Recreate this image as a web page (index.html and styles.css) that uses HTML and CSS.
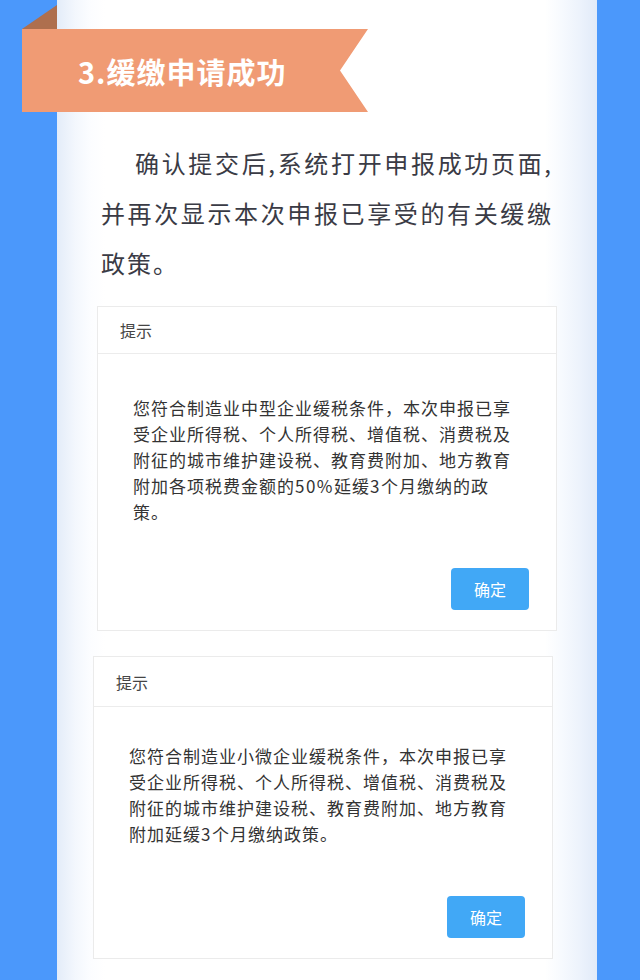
FILE: index.html
```html
<!DOCTYPE html>
<html lang="zh-CN">
<head>
<meta charset="utf-8">
<title>缓缴申请成功</title>
<link rel="stylesheet" href="styles.css">
</head>
<body>
<div class="panel">
  <div class="banner-wrap">
    <div class="banner"><span class="banner-text">3.缓缴申请成功</span></div>
  </div>
  <p class="intro">确认提交后,系统打开申报成功页面,并再次显示本次申报已享受的有关缓缴政策。</p>

  <div class="dlg dlg-one">
    <div class="dlg-head">提示</div>
    <div class="dlg-body">
      <p class="dlg-text">您符合制造业中型企业缓税条件，本次申报已享<br>受企业所得税、个人所得税、增值税、消费税及<br>附征的城市维护建设税、教育费附加、地方教育<br>附加各项税费金额的<span class="num">50%</span>延缓<span class="num">3</span>个月缴纳的政<br>策。</p>
      <div class="dlg-foot"><span class="btn">确定</span></div>
    </div>
  </div>

  <div class="dlg dlg-two">
    <div class="dlg-head">提示</div>
    <div class="dlg-body">
      <p class="dlg-text">您符合制造业小微企业缓税条件，本次申报已享<br>受企业所得税、个人所得税、增值税、消费税及<br>附征的城市维护建设税、教育费附加、地方教育<br>附加延缓<span class="num">3</span>个月缴纳政策。</p>
      <div class="dlg-foot"><span class="btn">确定</span></div>
    </div>
  </div>
</div>
</body>
</html>
```
FILE: styles.css
```css
html, body {
  margin: 0;
  padding: 0;
}
body {
  background: #4b98fb;
  font-family: "Noto Sans CJK SC", "Noto Sans", sans-serif;
  height: 980px;
  overflow: hidden;
}
.panel {
  margin-left: 57px;
  width: 540px;
  height: 980px;
  background: linear-gradient(to right, #e3ecf9 0px, #f3f7fd 18px, #fcfdff 34px, #ffffff 48px, #ffffff 488px, #f7fafe 504px, #edf3fc 522px, #e1eaf8 540px);
}
.banner-wrap {
  position: relative;
  padding-top: 29px;
}
.banner-wrap::before {
  content: "";
  position: absolute;
  left: -35px;
  top: 5px;
  width: 35px;
  height: 24px;
  background: #ae6f4e;
  clip-path: polygon(100% 0, 100% 100%, 0 100%);
}
.banner {
  margin-left: -35px;
  width: 346px;
  height: 83px;
  box-sizing: border-box;
  padding-left: 56px;
  background: #f09b74;
  clip-path: polygon(0 0, 100% 0, 318px 50%, 100% 100%, 0 100%);
  display: flex;
  align-items: center;
}
.banner-text {
  color: #ffffff;
  font-size: 29px;
  font-weight: 700;
  letter-spacing: 1px;
}
.intro {
  margin: 26px 0 0;
  padding: 0 44px;
  font-size: 24px;
  letter-spacing: 2px;
  line-height: 50px;
  text-indent: 34px;
  text-align: justify;
  color: #3a3b45;
}
.dlg {
  width: 460px;
  box-sizing: border-box;
  background: #ffffff;
  border: 1px solid #ebebeb;
}
.dlg-one {
  margin: 18px 0 0 40px;
}
.dlg-two {
  margin: 25px 0 0 36px;
}
.dlg-head {
  height: 46px;
  border-bottom: 1px solid #ececec;
  padding-left: 22px;
  display: flex;
  align-items: center;
  font-size: 16px;
  color: #454545;
}
.dlg-two .dlg-head {
  height: 49px;
}
.dlg-body {
  padding: 41px 27px 20px 35px;
}
.dlg-two .dlg-body {
  padding-top: 36px;
}
.dlg-text {
  margin: 0;
  font-size: 17px;
  letter-spacing: 1px;
  line-height: 26px;
  color: #333333;
  white-space: nowrap;
}
.num {
  letter-spacing: 1.5px;
}
.dlg-foot {
  display: flex;
  justify-content: flex-end;
  margin-top: 43px;
}
.dlg-two .dlg-foot {
  margin-top: 49px;
}
.btn {
  width: 78px;
  height: 42px;
  border-radius: 4px;
  background: #41a8f6;
  color: #ffffff;
  font-size: 16px;
  display: flex;
  align-items: center;
  justify-content: center;
}
```
